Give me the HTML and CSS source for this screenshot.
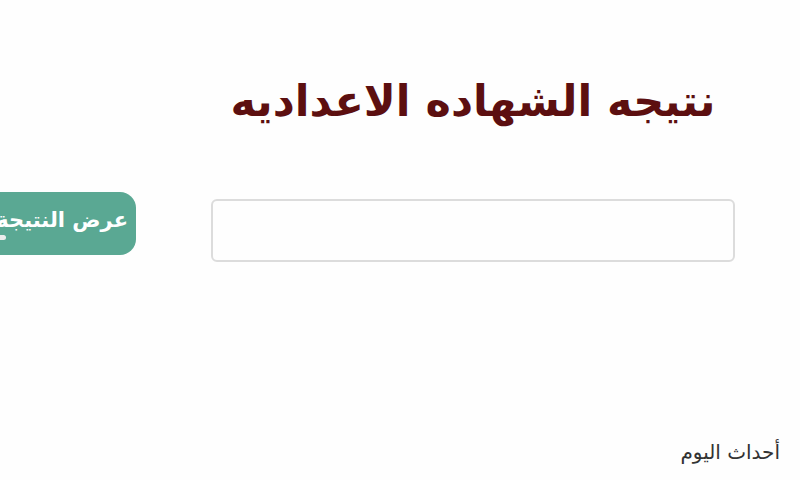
FILE: index.html
```html
<!DOCTYPE html>
<html lang="ar">
<head>
<meta charset="utf-8">
<link rel="stylesheet" href="styles.css">
</head>
<body>
<div class="page">
  <h1 class="title" dir="rtl">نتيجه الشهاده الاعداديه</h1>
  <div class="row">
    <button class="btn" dir="rtl">عرض النتيجة<span class="hand"></span></button>
    <input class="field" type="text">
  </div>
  <div class="brand" dir="rtl">أحداث اليوم</div>
</div>
</body>
</html>
```
FILE: styles.css
```css
html, body { margin: 0; padding: 0; background: #fefefe; overflow: hidden; }
.page { width: 800px; height: 480px; position: relative; font-family: "DejaVu Sans", "Noto Sans", sans-serif; }
.title {
  margin: 0;
  padding-top: 76px;
  padding-left: 222px;
  width: 502px;
  text-align: center;
  font-size: 43px;
  font-weight: bold;
  color: #5c0f10;
  line-height: 50px;
  white-space: nowrap;
}
.row { display: flex; align-items: flex-start; margin-top: 66px; }
.btn {
  position: relative;
  margin-left: -40px;
  width: 176px;
  height: 63px;
  border: none;
  border-radius: 16px;
  background: #5aa893;
  color: #fff;
  font-family: "DejaVu Sans", sans-serif;
  font-weight: bold;
  font-size: 21px;
  text-align: right;
  padding: 0 8px 8px 0;
  white-space: nowrap;
  overflow: hidden;
}
.hand { position: absolute; left: 38px; bottom: 15px; width: 8px; height: 5px; background: #ececec; border-radius: 0 3px 3px 0; }
.field {
  margin-left: 75px;
  margin-top: 7px;
  width: 524px;
  height: 63px;
  box-sizing: border-box;
  border: 2px solid #dcdcdc;
  border-radius: 6px;
  background: #fefefe;
}
.brand { position: absolute; right: 20px; top: 440px; font-size: 20px; color: #333; }
```
